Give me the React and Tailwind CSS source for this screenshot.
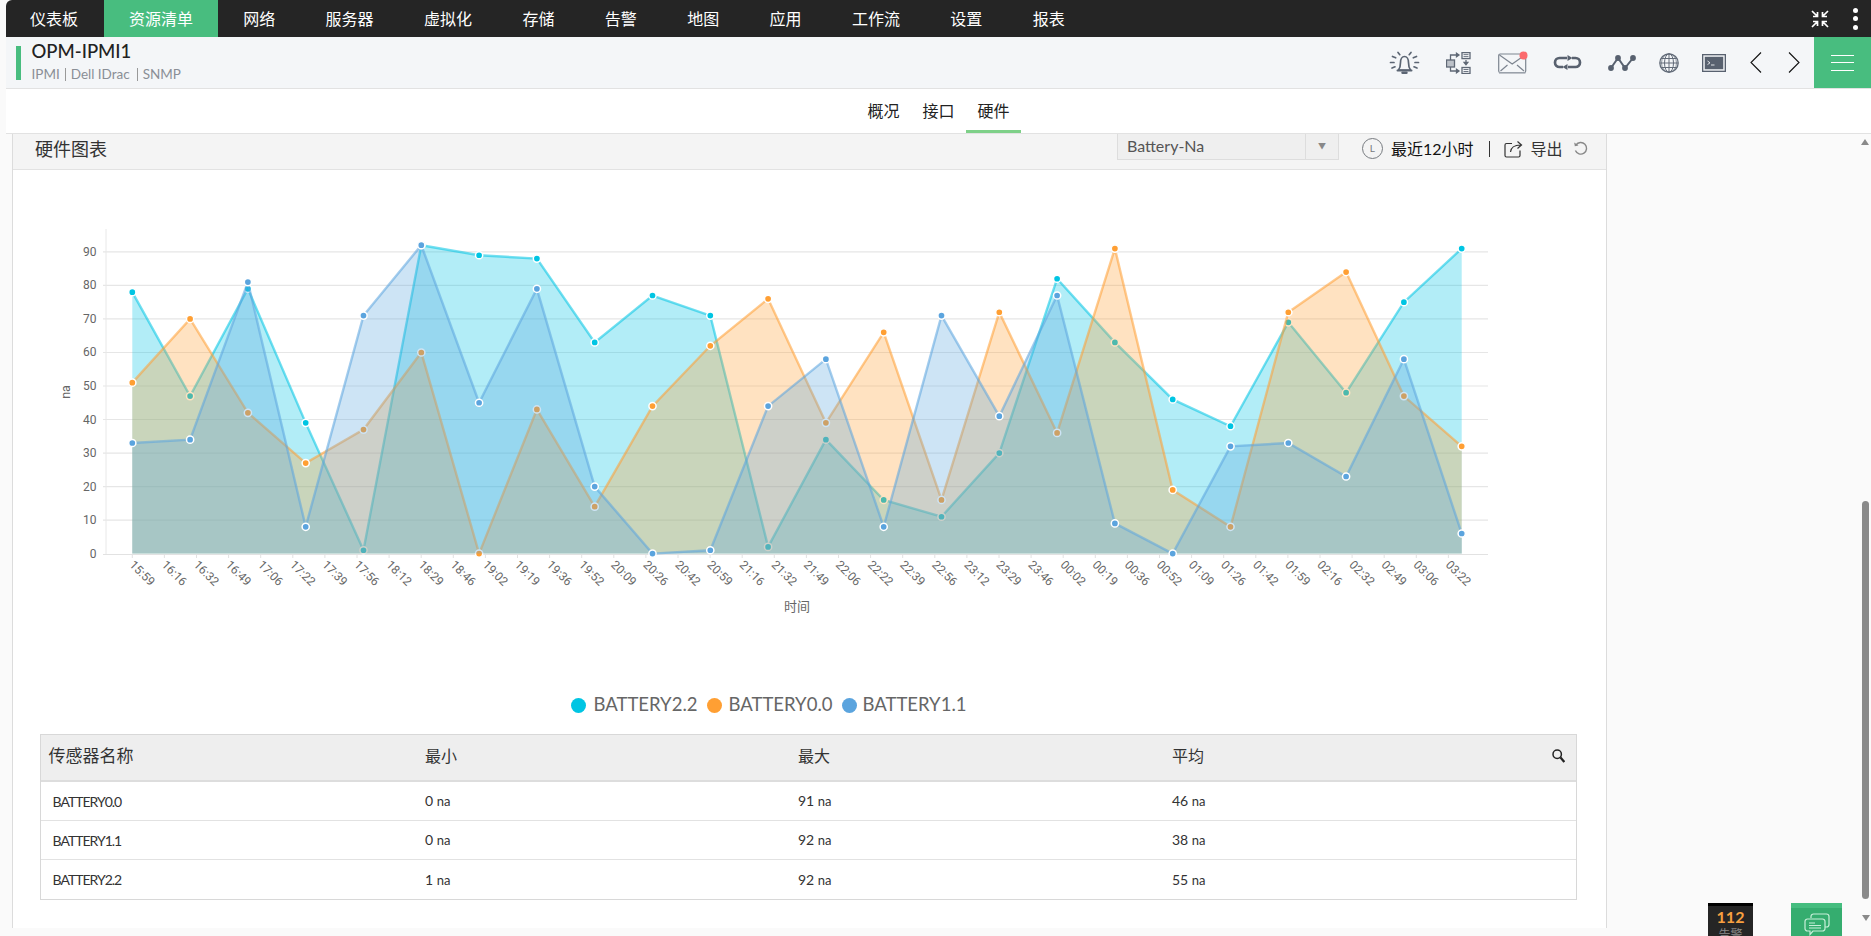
import React from "react";

const NAV = ["仪表板", "资源清单", "网络", "服务器", "虚拟化", "存储", "告警", "地图", "应用", "工作流", "设置", "报表"];
const TIMES = "15:59 16:16 16:32 16:49 17:06 17:22 17:39 17:56 18:12 18:29 18:46 19:02 19:19 19:36 19:52 20:09 20:26 20:42 20:59 21:16 21:32 21:49 22:06 22:22 22:39 22:56 23:12 23:29 23:46 00:02 00:19 00:36 00:52 01:09 01:26 01:42 01:59 02:16 02:32 02:49 03:06 03:22".split(" ");
const SERIES = [
  { color: "#00c5e3", data: [78, 47, 79, 39, 1, 92, 89, 88, 63, 77, 71, 2, 34, 16, 11, 30, 82, 63, 46, 38, 69, 48, 75, 91] },
  { color: "#ff9f33", data: [51, 70, 42, 27, 37, 60, 0, 43, 14, 44, 62, 76, 39, 66, 16, 72, 36, 91, 19, 8, 72, 84, 47, 32] },
  { color: "#5ba4de", data: [33, 34, 81, 8, 71, 92, 45, 79, 20, 0, 1, 44, 58, 8, 71, 41, 77, 9, 0, 32, 33, 23, 58, 6] },
];
const px = (i) => 132.3 + i * 57.8;
const py = (v) => 553.6 - v * 3.352;
const tickX = (i) => 132.3 + i * 32.1;

function Chart() {
  return (
    <svg width="1594" height="510" className="block" style={{ fontFamily: "Roboto, sans-serif" }}>
      <g transform="translate(-13 -170)">
        {[10, 20, 30, 40, 50, 60, 70, 80, 90].map((v) => (
          <line key={v} x1="103" x2="1488" y1={py(v)} y2={py(v)} stroke="#e6e6e6" strokeWidth="1.2" />
        ))}
        <line x1="106" x2="106" y1="229" y2="554" stroke="#e8e8e8" />
        <line x1="103" x2="1488" y1="554.5" y2="554.5" stroke="#e2e2e2" />
        {[0, 10, 20, 30, 40, 50, 60, 70, 80, 90].map((v) => (
          <text key={v} x="96.500" y={py(v) + 4} textAnchor="end" fontSize="12" fill="#666666">{v}</text>
        ))}
        <text transform="rotate(-90 70 392)" x="70" y="392" textAnchor="middle" fontSize="12.5" fill="#666666">na</text>
        {TIMES.map((t, i) => (
          <g key={t + i}>
            <line x1={tickX(i)} x2={tickX(i)} y1="555" y2="558" stroke="#e2e2e2" />
            <text x={tickX(i) - 3.5} y="565.500" transform={`rotate(45 ${tickX(i) - 3.5} 565.500)`} fontSize="12" fill="#666666">{t}</text>
          </g>
        ))}
        <text x="797" y="611" textAnchor="middle" fontSize="13" fill="#666666" style={{ fontFamily: "'Noto Sans CJK SC', sans-serif" }}>时间</text>
        {SERIES.map((s) => {
          const pts = s.data.map((v, i) => `${px(i)},${py(v)}`).join(" ");
          return (
            <g key={s.color}>
              <polygon points={`${px(0)},553.6 ${pts} ${px(23)},553.6`} fill={s.color} fillOpacity="0.3" />
              <polyline points={pts} fill="none" stroke={s.color} strokeOpacity="0.55" strokeWidth="2.4" />
              {s.data.map((v, i) => (
                <circle key={i} cx={px(i)} cy={py(v)} r="3.6" fill={s.color} stroke="#ffffff" strokeWidth="1.5" />
              ))}
            </g>
          );
        })}
      </g>
    </svg>
  );
}

function Bell() {
  return (
    <svg width="31" height="24" viewBox="0 0 31 24" fill="none" stroke="#5b6573" strokeWidth="1.700" strokeLinecap="round">
      <path d="M9.500 19c1.500-2 2-3.500 2-7.500 0-3.500 1.700-6 4-6s4 2.500 4 6c0 4 .5 5.500 2 7.500z" strokeLinejoin="round" />
      <path d="M8.500 19.500h14" strokeWidth="2" />
      <path d="M13.500 21.800h4" strokeWidth="2.400" />
      <path d="M9 1.500l1.800 2.200M22 1.500l-1.800 2.200M3.500 5.500l3.200 1.300M27.500 5.500l-3.200 1.300M1.500 11.500h3.500M26 11.500h3.500M3 17l3-1.200M28 17l-3-1.200" />
    </svg>
  );
}
function Flow() {
  return (
    <svg width="25" height="22" viewBox="0 0 25 22" fill="none" stroke="#5f6875" strokeWidth="1.300">
      <rect x="0.500" y="8" width="8" height="7" fill="#bcc1c8" />
      <path d="M4.500 8V3h7M4.500 15v4h7" />
      <path d="M10.500 1.200l2.500 1.800-2.500 1.800zM10.500 17.200l2.500 1.800-2.500 1.800z" fill="#5f6875" />
      <rect x="16" y="0.600" width="8" height="6" />
      <path d="M17.500 2.600h5M17.500 4.600h5" strokeWidth="0.900" />
      <rect x="16" y="15.500" width="8" height="6" />
      <path d="M17.500 17.500h5M17.500 19.500h5" strokeWidth="0.900" />
      <path d="M20 8v4M18.200 10.500l1.800 2.200 1.800-2.200z" fill="#5f6875" />
    </svg>
  );
}
function Mail() {
  return (
    <svg width="30" height="23" viewBox="0 0 30 23" fill="none" stroke="#7d8590" strokeWidth="1.200">
      <rect x="0.700" y="3" width="27" height="18.500" rx="1.500" />
      <path d="M1 21.800h26.500" stroke="#9aa1aa" strokeWidth="1.600" />
      <path d="M1.500 4l12.700 9 12.800-9M2.500 20l7-6M26 20l-7-6" />
      <circle cx="25.500" cy="4.500" r="4" fill="#fb6a6d" stroke="none" />
    </svg>
  );
}
function LoopIcon() {
  return (
    <svg width="31" height="15" viewBox="0 0 31 15" fill="none" stroke="#58616f" strokeWidth="2.700">
      <path d="M15 3H7.500a4.500 4.500 0 0 0 0 9H11" />
      <path d="M16 12h7.500a4.500 4.500 0 0 0 0-9H20" />
      <path d="M15.500 0l5 3-5 3zM15.500 9l-5 3 5 3z" fill="#58616f" stroke="none" />
    </svg>
  );
}
function PathIcon() {
  return (
    <svg width="28" height="16" viewBox="0 0 28 16" fill="#58616f" stroke="#58616f" strokeWidth="2">
      <path d="M3 13L10 3l7 10 8-10" fill="none" />
      <circle cx="3" cy="13" r="1.900" />
      <circle cx="10" cy="3" r="1.900" />
      <circle cx="17" cy="13" r="1.900" />
      <circle cx="25" cy="3" r="1.900" />
    </svg>
  );
}
function Globe() {
  return (
    <svg width="20" height="20" viewBox="0 0 20 20" fill="none" stroke="#626b78" strokeWidth="1">
      <circle cx="10" cy="10" r="9.200" strokeWidth="1.300" />
      <ellipse cx="10" cy="10" rx="4.500" ry="9.200" />
      <ellipse cx="10" cy="10" rx="7.500" ry="9.200" strokeWidth="0.700" />
      <path d="M10 .8v18.400M1 10h18M2.200 5.500h15.600M2.200 14.500h15.600" />
    </svg>
  );
}
function Terminal() {
  return (
    <svg width="24" height="18" viewBox="0 0 24 18">
      <rect width="24" height="18" fill="#58616f" />
      <rect x="1.300" y="1.300" width="21.400" height="15.400" fill="#eef0f3" />
      <rect x="2.800" y="2.800" width="18.400" height="12.400" fill="#58616f" />
      <path d="M5.500 7l2.500 1.800-2.500 1.800M9 11h3.500" fill="none" stroke="#eef0f3" strokeWidth="0.900" />
    </svg>
  );
}
function Chevron({ right }) {
  return (
    <svg width="12" height="21" viewBox="0 0 12 21" fill="none" stroke="#111111" strokeWidth="1.100">
      <path d={right ? "M1 .5l10 10-10 10" : "M11 .5l-10 10 10 10"} />
    </svg>
  );
}
function Collapse() {
  return (
    <svg width="18" height="18" viewBox="0 0 18 18" fill="none" stroke="#ffffff" strokeWidth="1.700">
      <path d="M1 1l5 5M6.500 2v4.500H2M17 1l-5 5M11.500 2v4.500H16M1 17l5-5M2 11.500h4.500V16M17 17l-5-5M16 11.500h-4.500V16" />
    </svg>
  );
}
function ClockIcon() {
  return (
    <span className="flex h-[21px] w-[21px] items-center justify-center rounded-full border border-[#777b80] text-[10px] text-[#777b80]">L</span>
  );
}
function ExportIcon() {
  return (
    <svg width="19" height="18" viewBox="0 0 19 18" fill="none" stroke="#333333" strokeWidth="1.200">
      <path d="M8 3.500H2.500a1.500 1.500 0 0 0-1.500 1.500v10.500a1.500 1.500 0 0 0 1.500 1.500h12a1.500 1.500 0 0 0 1.500-1.500v-5" />
      <path d="M6.500 12c.5-4.500 4-7 10-7M13.500 1.500l4 3.500-4 3.500" />
    </svg>
  );
}
function RefreshIcon() {
  return (
    <svg width="15" height="15" viewBox="0 0 15 15" fill="none" stroke="#888888" strokeWidth="1.400">
      <path d="M3 4a5.800 5.800 0 1 1-.6 5.500" />
      <path d="M1.200 1.500l.6 3.800 3.700-.8z" fill="#888888" stroke="none" />
    </svg>
  );
}
function SearchIcon() {
  return (
    <svg width="13" height="14" viewBox="0 0 13 14" fill="none" stroke="#222222" strokeWidth="1.500">
      <circle cx="5.200" cy="5.200" r="4.200" />
      <path d="M8.500 8.500l3.800 4.500" strokeWidth="2.200" />
    </svg>
  );
}
function ChatIcon() {
  return (
    <svg width="26" height="24" viewBox="0 0 26 24" fill="none" stroke="#c8efd9" strokeWidth="1.200">
      <path d="M7 5V3.500A2.500 2.500 0 0 1 9.500 1h13A2.500 2.500 0 0 1 25 3.500v8a2.500 2.500 0 0 1-2.500 2.500H21" />
      <path d="M3.500 6h15A2.500 2.500 0 0 1 21 8.500v7a2.500 2.500 0 0 1-2.500 2.500H9l-3 3.500V18H3.500A2.500 2.500 0 0 1 1 15.500v-7A2.500 2.500 0 0 1 3.500 6z" />
      <path d="M5 10h6M5 12.500h12M5 15h12" />
    </svg>
  );
}

const ROWS = [
  ["BATTERY0.0", "0", "91", "46"],
  ["BATTERY1.1", "0", "92", "38"],
  ["BATTERY2.2", "1", "92", "55"],
];

function Value({ n }) {
  return (
    <span>
      {n} <span className="text-[13px]">na</span>
    </span>
  );
}

export default function App() {
  return (
    <div className="relative h-[936px] w-full overflow-hidden bg-[#fafafa] pl-[6px] font-['Lato','Noto_Sans_CJK_SC',sans-serif]">
      <nav className="flex h-[37px] items-center rounded-tl-[6px] bg-[#252525] text-[16px] text-white">
        {NAV.map((n, i) => (
          <span key={n} className={`flex h-full items-center ${i === 0 ? "pl-[24px] pr-[26px]" : i === 1 ? "px-[25px]" : "px-[25.200px]"} ${i === 1 ? "bg-[#48bd7f]" : ""}`}>
            {n}
          </span>
        ))}
        <div className="ml-auto flex items-center">
          <Collapse />
          <span className="ml-[24px] mr-[13px] flex flex-col gap-[3.500px]">
            <span className="h-[5px] w-[5px] rounded-full bg-white" />
            <span className="h-[5px] w-[5px] rounded-full bg-white" />
            <span className="h-[5px] w-[5px] rounded-full bg-white" />
          </span>
        </div>
      </nav>

      <header className="flex h-[52px] items-center border-b border-[#e2e2e2] bg-[#f4f6f8]">
        <span className="ml-[10px] h-[34px] w-[5px] bg-[#48bd7f]" />
        <div className="ml-[10.500px] mt-[3px] self-start">
          <div className="text-[18.500px] font-medium leading-[22px] text-[#222222]">OPM-IPMI1</div>
          <div className="mt-[6px] flex items-center text-[13.500px] leading-[13px] text-[#8a8f96]">
            <span className="border-r border-[#999999] pr-[5px]">IPMI</span>
            <span className="border-r border-[#999999] px-[5px] pr-[7px]">Dell IDrac</span>
            <span className="pl-[5px]">SNMP</span>
          </div>
        </div>
        <div className="ml-auto flex h-full items-center">
          <Bell />
          <span className="ml-[26px]"><Flow /></span>
          <span className="ml-[27px]"><Mail /></span>
          <span className="ml-[24px]"><LoopIcon /></span>
          <span className="ml-[25px]"><PathIcon /></span>
          <span className="ml-[23px]"><Globe /></span>
          <span className="ml-[23px]"><Terminal /></span>
          <span className="ml-[24px]"><Chevron /></span>
          <span className="ml-[26px]"><Chevron right /></span>
          <button className="ml-[14px] flex h-full w-[57px] flex-col items-center justify-center gap-[6.500px] bg-[#48bd7f]">
            <span className="h-px w-[23px] bg-white" />
            <span className="h-px w-[23px] bg-white" />
            <span className="h-px w-[23px] bg-white" />
          </button>
        </div>
      </header>

      <div className="flex h-[45px] items-stretch justify-center border-b border-[#e2e2e2] bg-white text-[16px] text-[#222222]">
        <span className="flex w-[55px] items-center justify-center">概况</span>
        <span className="flex w-[55px] items-center justify-center">接口</span>
        <span className="flex w-[55px] items-center justify-center border-b-[3px] border-[#7ed088] pt-[3px]">硬件</span>
      </div>

      <main className="flex h-[794px]">
        <section className="ml-[5.500px] w-[1595px] border-x border-[#dcdcdc] bg-white">
          <div className="flex h-[36px] items-center border-b border-[#e2e2e2] bg-[#f4f4f4] pb-[5px] pl-[22.500px]">
            <span className="text-[18px] text-[#333333]">硬件图表</span>
            <div className="ml-auto mb-[1px] flex h-full items-center">
              <div className="mb-[4px] flex h-[26px] w-[222px] items-center border border-t-0 border-[#dddddd] bg-[#efefef] text-[16px] text-[#555555]">
                <span className="flex-1 pl-[9px]">Battery-Na</span>
                <span className="flex h-full w-[33px] items-center justify-center border-l border-[#dddddd] text-[8px] text-[#888888]">▼</span>
              </div>
              <span className="ml-[23px]"><ClockIcon /></span>
              <span className="ml-[8px] text-[16px] text-[#111111]">最近12小时</span>
              <span className="ml-[16px] h-[16px] w-px bg-[#333333]" />
              <span className="ml-[14px]"><ExportIcon /></span>
              <span className="ml-[7px] text-[16px] text-[#333333]">导出</span>
              <span className="ml-[10px] mr-[18px]"><RefreshIcon /></span>
            </div>
          </div>

          <Chart />

          <div className="mt-[15px] flex h-[20px] items-center pl-[558px] text-[18.500px] text-[#666666]">
            <span className="h-[15px] w-[15px] rounded-full bg-[#00c5e3]" />
            <span className="ml-[8px] w-[104px] whitespace-nowrap">BATTERY2.2</span>
            <span className="ml-[9px] h-[15px] w-[15px] rounded-full bg-[#ff9f33]" />
            <span className="ml-[7px] w-[104px] whitespace-nowrap">BATTERY0.0</span>
            <span className="ml-[9px] h-[15px] w-[15px] rounded-full bg-[#5ba4de]" />
            <span className="ml-[6px] w-[104px] whitespace-nowrap">BATTERY1.1</span>
          </div>

          <div className="ml-[27px] mt-[19px] w-[1537px] border border-[#d8d8d8] text-[#333333]">
            <div className="grid h-[47px] grid-cols-[384.500px_373px_374px_1fr] items-center border-b-2 border-[#dddddd] bg-[#eeeeee] pb-[3px] text-[16px]">
              <span className="pl-[8px] text-[17px]">传感器名称</span>
              <span>最小</span>
              <span>最大</span>
              <span className="flex items-center justify-between pr-[11px]">平均<SearchIcon /></span>
            </div>
            {ROWS.map((r, i) => (
              <div key={r[0]} className={`grid h-[39px] grid-cols-[384.500px_373px_374px_1fr] items-center text-[14px] ${i < 2 ? "border-b border-[#e2e2e2]" : ""}`}>
                <span className="pl-[12px] tracking-[-1px]">{r[0]}</span>
                <Value n={r[1]} />
                <Value n={r[2]} />
                <Value n={r[3]} />
              </div>
            ))}
          </div>
        </section>
      </main>

      <div className="absolute right-[2px] top-[139px] h-0 w-0 border-x-[4px] border-b-[6px] border-x-transparent border-b-[#8a8a8a]" />
      <div className="absolute bottom-[37px] right-[2px] top-[501px] w-[7px] rounded-[4px] bg-[#8a8a8a]" />
      <div className="absolute bottom-[15px] right-[1px] h-0 w-0 border-x-[4px] border-t-[6px] border-x-transparent border-t-[#8a8a8a]" />

      <div className="absolute left-[1708px] top-[903px] h-[33px] w-[45px] overflow-hidden border-t-[3px] border-black bg-[#252525] text-center">
        <div className="text-[16px] font-bold leading-[22px] text-[#f7a040]">112</div>
        <div className="text-[12px] leading-[14px] text-[#888888]">告警</div>
      </div>
      <div className="absolute left-[1791px] top-[903px] flex h-[33px] w-[51px] justify-center overflow-hidden border-t-[5px] border-[#45bd7f] bg-[#35ad6f] pt-[5px]">
        <ChatIcon />
      </div>
    </div>
  );
}
